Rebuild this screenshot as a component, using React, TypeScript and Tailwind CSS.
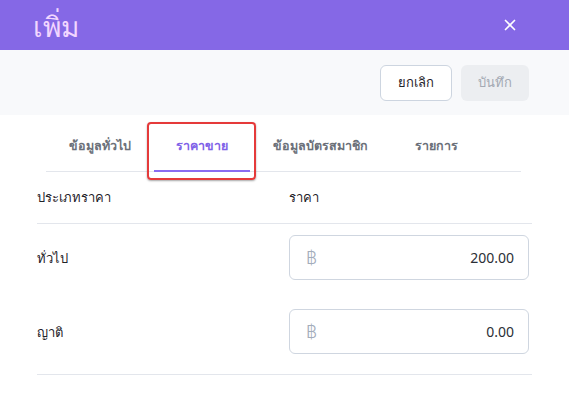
import { X } from 'lucide-react'

const TABS = [
  { label: 'ข้อมูลทั่วไป', width: 'w-[108px]' },
  { label: 'ราคาขาย', width: 'w-[96px]' },
  { label: 'ข้อมูลบัตรสมาชิก', width: 'w-[140px]' },
  { label: 'รายการ', width: 'w-[92px]' },
] as const

const ROWS = [
  { label: 'ทั่วไป', value: '200.00' },
  { label: 'ญาติ', value: '0.00' },
] as const

function PriceInput({ value }: { value: string }) {
  return (
    <div className="flex h-[45px] w-[240px] items-center justify-between rounded-md border border-[#cfd6e0] bg-white pl-[16px] pr-[14px]">
      <span className="text-[17px] font-light text-[#a3acba]">฿</span>
      <span className="text-[14px] text-[#2b2f36]">{value}</span>
    </div>
  )
}

export default function App() {
  return (
    <div className="h-[396px] w-[569px] overflow-hidden bg-white font-['Noto_Sans','Inter',sans-serif]">
      {/* Title bar */}
      <div className="flex h-[50px] items-center justify-between bg-[#8568e6] pl-[33px] pr-[50px]">
        <h1 className="pt-[2px] text-[28px] leading-none text-[#f2d6ff]">เพิ่ม</h1>
        <X className="h-[18px] w-[18px] text-white" strokeWidth={2.2} />
      </div>

      {/* Actions */}
      <div className="flex h-[65px] items-center justify-end gap-[9px] bg-[#f8f9fb] pr-[40px]">
        <button
          type="button"
          className="h-[36px] w-[72px] rounded-md border border-[#cdd5e0] bg-white text-[13px] font-medium text-[#1f2329]"
        >
          ยกเลิก
        </button>
        <button
          type="button"
          className="h-[36px] w-[68px] rounded-md bg-[#eceef1] text-[13px] font-medium text-[#a3a9b3]"
        >
          บันทึก
        </button>
      </div>

      {/* Tabs */}
      <div className="relative ml-[46px] mt-[7px] flex h-[50px] w-[475px] items-stretch border-b border-[#e3e6ec]">
        {TABS.map((tab, i) => (
          <div
            key={tab.label}
            className={`flex items-center justify-center text-[12.5px] font-semibold ${tab.width} ${
              i === 1 ? '-mb-px border-b-2 border-[#8a6cf0] text-[#8062e8]' : 'text-[#6b7079]'
            }`}
          >
            {tab.label}
          </div>
        ))}
        {/* highlight annotation */}
        <div className="pointer-events-none absolute left-[101px] top-[0px] h-[58px] w-[109px] rounded-[4px] border-2 border-[#e53a3a] shadow-[0_1px_2px_rgba(0,0,0,0.35)]" />
      </div>

      {/* Table */}
      <div className="mx-[37px] mt-[1px]">
        <div className="flex h-[51px] items-center border-b border-[#e3e6ec] text-[13px] text-[#1f2329]">
          <span className="w-[252px]">ประเภทราคา</span>
          <span>ราคา</span>
        </div>
        <div className="flex flex-col gap-[29px] border-b border-[#e3e6ec] pt-[11px] pb-[20px]">
          {ROWS.map((row) => (
            <div key={row.label} className="flex items-center">
              <span className="w-[252px] pt-[3px] text-[13px] text-[#1f2329]">{row.label}</span>
              <PriceInput value={row.value} />
            </div>
          ))}
        </div>
      </div>
    </div>
  )
}
